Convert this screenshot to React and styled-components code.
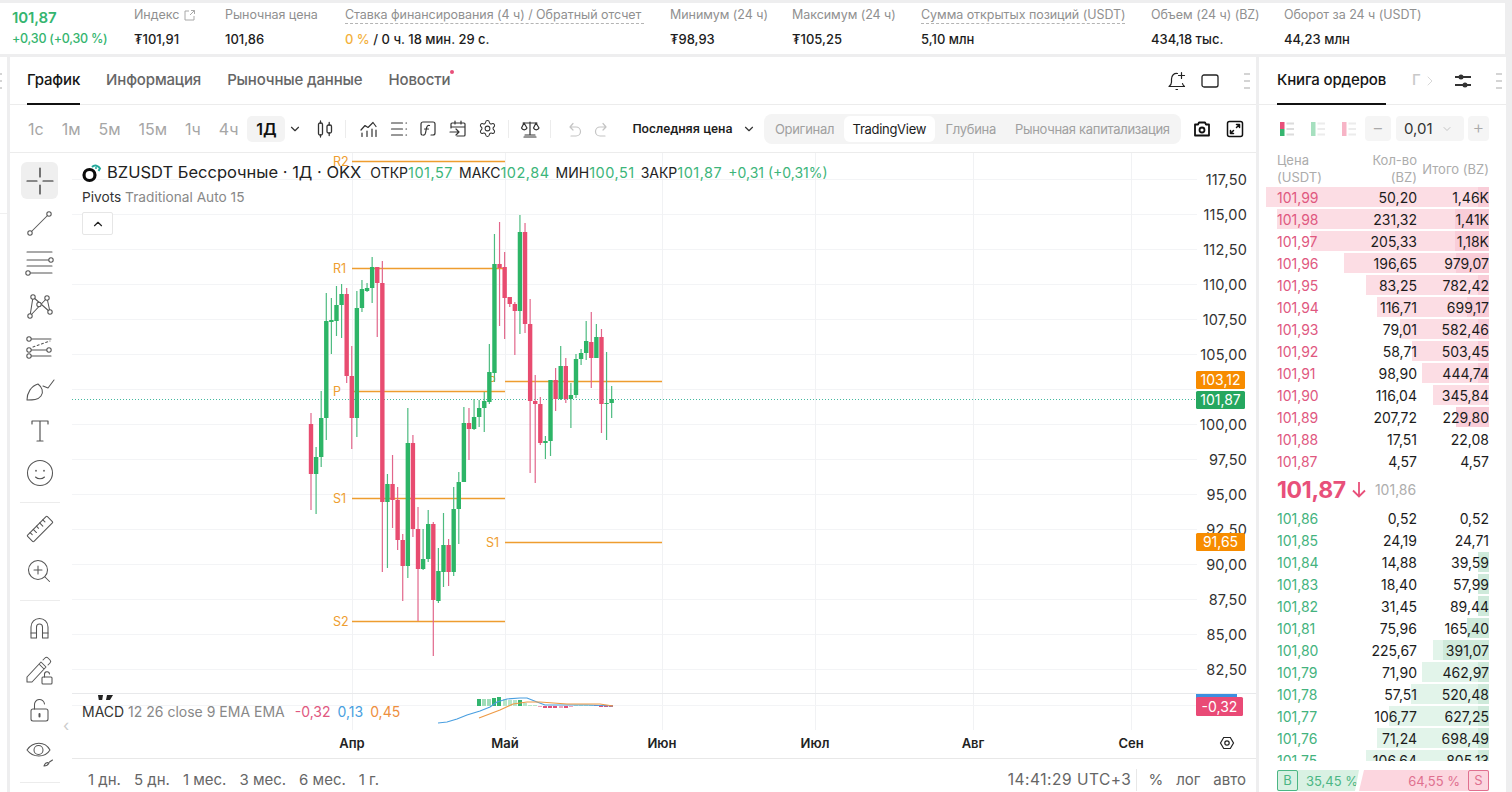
import React from "react";
import styled, { createGlobalStyle } from "styled-components";
import { ChevronDown, ChevronRight, ChevronUp, Settings } from "lucide-react";

const GlobalStyle = createGlobalStyle`
  html, body {
    margin: 0;
    padding: 0;
    background: #eeeeef;
    font-family: "Inter", "Noto Sans", sans-serif;
    color: #1c1c1c;
    overflow: hidden;
  }
  * { box-sizing: border-box; }
`;

const Page = styled.div`
  width: 1512px;
  height: 792px;
  padding-top: 3px;
  display: flex;
  flex-direction: column;
  gap: 3px;
  overflow: hidden;
`;

/* top stats */
const StatsBar = styled.div`
  width: 1505px;
  height: 51px;
  padding-left: 12px;
  background: #fff;
  display: flex;
  gap: 26px;
  align-items: flex-start;
`;

const PriceBlock = styled.div`
  display: flex;
  flex-direction: column;
  width: 96px;
`;

const LastPrice = styled.div`
  margin-top: 5px;
  height: 20px;
  line-height: 20px;
  font-size: 15px;
  font-weight: 600;
  letter-spacing: -0.1px;
  color: #35b56f;
`;

const PriceChange = styled.div`
  margin-top: 2px;
  font-size: 12.5px;
  line-height: 18px;
  font-weight: 500;
  letter-spacing: -0.25px;
  white-space: nowrap;
  color: #35b56f;
`;

const Stat = styled.div`
  flex: none;
  width: ${(p) => p.$w}px;
  display: flex;
  flex-direction: column;
`;

const StatLabel = styled.div`
  margin-top: 4px;
  height: 17px;
  line-height: 16px;
  font-size: 12.5px;
  letter-spacing: -0.05px;
  color: #909090;
  white-space: nowrap;
  display: flex;
  align-items: center;
  gap: 4px;
  border-bottom: ${(p) => (p.$dashed ? "1px dashed #b4b4b4" : "1px solid transparent")};
`;

const StatValue = styled.div`
  margin-top: 6px;
  line-height: 18px;
  font-size: 13px;
  font-weight: 500;
  white-space: nowrap;
  color: #1c1c1c;
`;

const Amber = styled.span`
  color: #f3b13c;
`;

/* main columns */
const Main = styled.div`
  flex: 1;
  display: flex;
  gap: 3px;
  min-height: 0;
`;

const Sliver = styled.div`
  width: 7px;
  background: #fff;
`;

const Handle = styled.div`
  width: 6px;
  height: 16px;
  background: linear-gradient(
    #d4d4d4 0 2px,
    transparent 2px 7px,
    #d4d4d4 7px 9px,
    transparent 9px 14px,
    #d4d4d4 14px 16px
  );
`;

const SliverHandle = styled(Handle)`
  margin: 16px 0 0 -4px;
`;

const SliverRule = styled.div`
  margin-top: 124px;
  height: 1px;
  background: #f0f0f0;
`;

const ChartPanel = styled.div`
  width: 1246px;
  background: #fff;
  display: flex;
  flex-direction: column;
`;

const BookPanel = styled.div`
  width: 247px;
  background: #fff;
  display: flex;
  flex-direction: column;
`;

const TabBar = styled.div`
  height: 48px;
  flex: none;
  display: flex;
  align-items: stretch;
  border-bottom: 1px solid #ececec;
`;

const ChartTabs = styled.div`
  flex: 1;
  display: flex;
  gap: 26px;
  padding-left: 17px;
`;

const Tab = styled.div`
  position: relative;
  height: 48px;
  line-height: 46px;
  font-size: 15px;
  font-weight: 500;
  letter-spacing: -0.15px;
  white-space: nowrap;
  color: ${(p) => (p.$active ? "#161616" : "#666")};
  border-bottom: 2px solid ${(p) => (p.$active ? "#111" : "transparent")};
`;

const FadedTab = styled.div`
  width: 10px;
  margin-left: 26px;
  overflow: hidden;
  line-height: 46px;
  font-size: 15px;
  font-weight: 500;
  color: #c9c9c9;
`;

const NewsDot = styled.i`
  position: absolute;
  top: 13px;
  right: -4px;
  width: 4px;
  height: 4px;
  border-radius: 50%;
  background: #e8507a;
`;

const TabActions = styled.div`
  display: flex;
  align-items: center;
  padding-right: ${(p) => p.$pr}px;
  color: #222;
`;

const IconSlot = styled.div`
  flex: none;
  width: ${(p) => p.$w || 24}px;
  margin-left: ${(p) => p.$ml || 0}px;
  display: flex;
  align-items: center;
  justify-content: center;
  color: ${(p) => (p.$muted ? "#c4c4c4" : "#333")};
`;

const ActionHandle = styled(Handle)`
  margin-left: ${(p) => p.$ml}px;
`;

const Toolbar = styled.div`
  height: 48px;
  flex: none;
  display: flex;
  align-items: center;
  padding-left: 18px;
  border-bottom: 1px solid #ececec;
`;

const TimeButton = styled.div`
  height: 26px;
  line-height: 26px;
  margin-right: 18px;
  font-size: 16px;
  color: #a6a6a6;
`;

const ActiveTime = styled.div`
  width: 38px;
  height: 26px;
  line-height: 26px;
  margin-left: -9px;
  text-align: center;
  font-size: 16px;
  font-weight: 600;
  color: #111;
  background: #f3f3f3;
  border-radius: 5px;
`;

const Separator = styled.div`
  flex: none;
  width: 1px;
  height: 18px;
  margin-left: ${(p) => p.$ml}px;
  background: #ececec;
`;

const PriceType = styled.div`
  width: 90px;
  margin-left: 14px;
  font-family: "Roboto", sans-serif;
  font-size: 13px;
  font-weight: 500;
  white-space: nowrap;
  color: #1c1c1c;
`;

const Segment = styled.div`
  flex: none;
  width: 417px;
  height: 30px;
  margin-left: 8px;
  border-radius: 8px;
  background: #f4f4f4;
  display: flex;
  align-items: center;
  padding-left: 1px;
`;

const SegmentItem = styled.div`
  height: 26px;
  line-height: 26px;
  padding: 0 ${(p) => (p.$active ? 9 : 9.5)}px;
  border-radius: 6px;
  font-size: 13px;
  letter-spacing: -0.3px;
  white-space: nowrap;
  margin-right: ${(p) => (p.$active ? 1 : 0)}px;
  color: ${(p) => (p.$active ? "#1c1c1c" : "#a0a0a0")};
  background: ${(p) => (p.$active ? "#fff" : "transparent")};
`;

/* chart */
const Workspace = styled.div`
  flex: 1;
  display: flex;
  min-height: 0;
`;

const ToolRail = styled.div`
  width: 62px;
  flex: none;
  padding: 7px 3px 0 0;
  display: flex;
  flex-direction: column;
  align-items: center;
  color: #555;
`;

const ToolSlot = styled.div`
  width: 37px;
  height: 41.7px;
  flex: none;
  display: flex;
  align-items: center;
  justify-content: center;
`;

const ActiveTool = styled.div`
  width: 37px;
  height: 37px;
  border-radius: 6px;
  background: #efefef;
  display: flex;
  align-items: center;
  justify-content: center;
  color: #222;
`;

const RailDivider = styled.div`
  width: 40px;
  height: 1px;
  flex: none;
  margin: 8px 0 6px;
  background: #ececec;
`;

const ChartColumn = styled.div`
  flex: 1;
  display: flex;
  flex-direction: column;
  min-width: 0;
`;

const ChartArea = styled.div`
  position: relative;
  height: 605px;
  flex: none;
`;

const ChartSvg = styled.svg`
  display: block;
  font-family: "Inter", "Noto Sans", sans-serif;
`;

const Legend = styled.div`
  position: absolute;
  left: 10px;
  top: 8px;
  display: flex;
  flex-direction: column;
  align-items: flex-start;
`;

const LegendTitle = styled.div`
  display: flex;
  align-items: center;
  height: 22px;
  white-space: nowrap;
`;

const SymbolName = styled.span`
  margin-left: 5px;
  margin-right: 9px;
  font-size: 16.5px;
  color: #222;
`;

const OhlcKey = styled.span`
  font-size: 14px;
  color: #222;
`;

const OhlcValue = styled.span`
  margin-right: 6px;
  font-size: 14.5px;
  letter-spacing: 0.5px;
  color: #3cb57a;
`;

const OhlcChange = styled.span`
  font-size: 14px;
  color: #3cb57a;
`;

const PivotRow = styled.div`
  margin-top: 5px;
  font-size: 13.7px;
  line-height: 18px;
  white-space: nowrap;
  color: #888;
`;

const DarkWord = styled.span`
  color: #333;
`;

const CollapseButton = styled.div`
  margin-top: 6px;
  width: 31px;
  height: 23px;
  background: #fff;
  border: 1px solid #e6e6e6;
  border-radius: 2px;
  display: flex;
  align-items: center;
  justify-content: center;
  color: #222;
`;

const MacdRow = styled.div`
  position: absolute;
  left: 10px;
  top: 550px;
  display: flex;
  gap: 7px;
  font-size: 14px;
  line-height: 18px;
  white-space: nowrap;
  color: #888;
`;

const MacdValue = styled.span`
  color: ${(p) => p.$color};
  margin-left: ${(p) => p.$ml || 0}px;
`;

const RailToggle = styled.div`
  position: absolute;
  left: -9px;
  top: 562px;
  color: #ccc;
`;

const RangeBar = styled.div`
  flex: 1;
  display: flex;
  align-items: center;
  padding: 8px 10px 0 16px;
  border-top: 1px solid #e8e8e8;
  font-size: 15px;
  color: #666;
`;

const Ranges = styled.div`
  flex: 1;
  display: flex;
  gap: 13px;
`;

const RangeInfo = styled.div`
  display: flex;
  align-items: center;
  white-space: nowrap;
`;

const TimeZone = styled.span`
  padding-right: 5px;
  font-size: 15.5px;
  letter-spacing: 0.5px;
`;

const ScaleOptions = styled.div`
  height: 22px;
  display: flex;
  align-items: center;
  gap: 13px;
  padding-left: 11px;
  border-left: 1px solid #e8e8e8;
`;

/* order book */
const BookTabs = styled.div`
  flex: 1;
  display: flex;
  padding-left: 18px;
`;

const BookControls = styled.div`
  height: 47px;
  flex: none;
  display: flex;
  align-items: center;
  padding-left: 21px;
`;

const StepButton = styled.div`
  flex: none;
  width: ${(p) => p.$w}px;
  height: 25px;
  margin-left: ${(p) => p.$ml || 0}px;
  border-radius: 4px;
  background: #f5f5f5;
  font-size: 18px;
  font-weight: 300;
  line-height: 23px;
  text-align: center;
  color: #aaa;
`;

const StepSelect = styled.div`
  flex: none;
  width: 68px;
  height: 25px;
  margin-left: 5px;
  padding-left: 8px;
  border-radius: 4px;
  background: #f5f5f5;
  display: flex;
  align-items: center;
  gap: 8px;
  font-size: 15px;
  color: #333;
`;

const BookHeader = styled.div`
  height: 34px;
  flex: none;
  padding: 0 17px 0 18px;
  display: grid;
  grid-template-columns: 1fr 72px 72px;
  align-items: center;
  font-size: 13px;
  line-height: 17px;
  color: #acacac;
`;

const HeadCell = styled.div`
  text-align: ${(p) => (p.$left ? "left" : "right")};
  white-space: nowrap;
`;

const BookList = styled.div`
  height: ${(p) => p.$h}px;
  flex: none;
  padding: 0 17px 0 18px;
  overflow: hidden;
`;

const BookRow = styled.div`
  position: relative;
  height: 22px;
  display: grid;
  grid-template-columns: 1fr 72px 72px;
  align-items: center;
  font-size: 14px;
  color: #1c1c1c;
`;

const Depth = styled.i`
  position: absolute;
  right: 0;
  top: 1px;
  bottom: 1px;
  background: ${(p) => p.$color};
`;

const Cell = styled.span`
  position: relative;
  text-align: right;
`;

const PriceCell = styled.span`
  position: relative;
  color: ${(p) => (p.$side === "ask" ? "#e0587f" : "#44b37e")};
`;

const MidRow = styled.div`
  height: 35px;
  flex: none;
  padding-left: 18px;
  display: flex;
  align-items: center;
`;

const MidPrice = styled.span`
  font-size: 23px;
  font-weight: 700;
  letter-spacing: -0.3px;
  color: #e8507a;
`;

const MidArrow = styled.span`
  display: flex;
  margin-left: 6px;
  color: #e8507a;
`;

const MidMark = styled.span`
  margin-left: 9px;
  font-size: 14px;
  color: #aeaeae;
`;

const RatioBar = styled.div`
  margin: 9px 17px 0 18px;
  height: 21px;
  display: flex;
  font-size: 13px;
  white-space: nowrap;
`;

const BuySide = styled.div`
  width: 82px;
  background: #d9f1e3;
  clip-path: polygon(0 0, 100% 0, calc(100% - 4px) 100%, 0 100%);
  display: flex;
  align-items: center;
  gap: 8px;
  color: #4bb684;
`;

const SellSide = styled.div`
  flex: 1;
  background: #fcd6df;
  clip-path: polygon(5px 0, 100% 0, 100% 100%, 0 100%);
  display: flex;
  align-items: center;
  justify-content: flex-end;
  gap: 8px;
  color: #e0708f;
`;

const SideBox = styled.span`
  flex: none;
  width: 21px;
  height: 21px;
  line-height: 19px;
  text-align: center;
  font-size: 13px;
  border-radius: 2px;
  border: 1px solid ${(p) => p.$color};
`;

/* drawings */
const stroke = { fill: "none", stroke: "currentColor", strokeLinecap: "round", strokeLinejoin: "round" };

const Ic = ({ size = 32, w = 1.05, children }) => (
  <svg width={size} height={size} viewBox={`0 0 ${size} ${size}`} strokeWidth={w} {...stroke}>
    {children}
  </svg>
);

const Dot = ({ x, y, r = 2.2 }) => <circle cx={x} cy={y} r={r} fill="#fff" />;

const railIcons = [
  <Ic w={1.2}>
    <path d="M3 16h10M19 16h10M16 3v9M16 20v9" />
  </Ic>,
  <Ic>
    <path d="M7.5 24.5 23.5 8.5" />
    <Dot x={25} y={7} />
    <Dot x={6} y={26} />
  </Ic>,
  <Ic>
    <path d="M3 4h25M3 12h22M3 18h25M6 25h22" />
    <Dot x={27} y={12} />
    <Dot x={4} y={25} />
  </Ic>,
  <Ic>
    <path d="M6 26 9 7l17 15L23 8 6 26Z" />
    <Dot x={9} y={7} />
    <Dot x={23} y={8} />
    <Dot x={15} y={14.5} />
    <Dot x={6} y={26} />
    <Dot x={26} y={22} />
  </Ic>,
  <Ic>
    <path d="M7 7h20M7 18h16M7 24h20" />
    <path d="M9 15 26 9" strokeDasharray="2 2.5" />
    <Dot x={5} y={7} />
    <Dot x={5} y={18} />
    <Dot x={25} y={18} />
    <Dot x={5} y={24} />
  </Ic>,
  <Ic>
    <path d="M3 27c0-7 4-14 11-16 4 3 6 8 3 12-3 4-8 4-14 4Z" />
    <path d="M19 13l5 2 6-8" />
  </Ic>,
  <Ic w={1.2}>
    <path d="M8 9V6h16v3M16 6v20M13 26h6" />
  </Ic>,
  <Ic>
    <circle cx="16" cy="16" r="12.5" />
    <path d="M11.5 20c2.5 2.4 6.5 2.4 9 0" />
    <path d="M12 13.5v.5M20 13.5v.5" strokeWidth="1.6" />
  </Ic>,
  <Ic>
    <g transform="rotate(-45 16 16)">
      <rect x="2" y="11.5" width="28" height="9" rx="1" />
      <path d="M6.5 11.5v3M11 11.5v4.5M15.5 11.5v3M20 11.5v4.5M24.5 11.5v3" />
    </g>
  </Ic>,
  <Ic>
    <circle cx="14" cy="15" r="9.5" />
    <path d="M14 11v8M10 15h8M21 22l4.5 4.5" />
  </Ic>,
  <Ic>
    <path d="M7 26V15a8.5 8.5 0 0 1 17 0v11h-5.5V15a3 3 0 0 0-6 0v11Z" />
    <path d="M7 21h5.5M18.5 21H24" />
  </Ic>,
  <Ic>
    <path d="m3 24 0 5 5 0L22 14l-5-5L3 24ZM15 11l5 5M19 7l2-2c1-1 2-1 3 0l2 2c1 1 1 2 0 3l-2 2" />
    <rect x="18" y="24" width="10" height="7" rx="1" />
    <path d="M20.5 24v-2.5a2.5 2.5 0 0 1 5-.5" />
  </Ic>,
  <Ic>
    <rect x="7" y="14" width="17" height="12" rx="2" />
    <path d="M10.5 14v-4a5 5 0 0 1 10-1" />
    <path d="M15.5 19v2.5" strokeWidth="2" />
  </Ic>,
  <Ic>
    <path d="M3 13c6-9 18-9 23 0-5 8-17 8-23 0Z" />
    <circle cx="14.5" cy="13" r="4.5" />
    <path d="M20 29c1-3 3-4 5-3-1 2-3 3-5 3ZM25.5 25l3-2" />
  </Ic>,
];

const CandlesIcon = () => (
  <svg width="20" height="20" viewBox="0 0 20 20" {...stroke} strokeWidth="1.3">
    <rect x="3.5" y="4" width="4" height="12" rx="1.5" />
    <rect x="12" y="6" width="4.5" height="8" rx="1.5" />
    <path d="M5.5 2v2M5.5 16v2M14.2 3.5V6M14.2 14v2.5" />
  </svg>
);

const IndicatorIcon = () => (
  <svg width="20" height="20" viewBox="0 0 20 20" {...stroke} strokeWidth="1.2">
    <path d="M2 11 6 6.5 9 8.5 14 3.5l3 4" />
    <path d="M3 14v3.5M8 12v5.5M13 10v7.5M17 11v6.5" />
  </svg>
);

const ListIcon = () => (
  <svg width="20" height="20" viewBox="0 0 20 20" {...stroke} strokeWidth="1.2">
    <path d="M2.5 4h11M2.5 10h11M2.5 16h11M17 4h.5M17 10h.5M17 16h.5" />
  </svg>
);

const FormulaIcon = () => (
  <svg width="20" height="20" viewBox="0 0 20 20" {...stroke} strokeWidth="1.2">
    <path d="M8 3h7a2 2 0 0 1 2 2v9a2 2 0 0 1-2 2h-2M3 13V5a2 2 0 0 1 2-2h3M3 13v1a2 2 0 0 0 1 2" />
    <path d="M11.5 6.5c-2-.5-2.5.5-3 2.5l-1 5c-.3 1.5-1 2.3-2.5 2M6.5 10h4" />
  </svg>
);

const ReplayIcon = () => (
  <svg width="20" height="20" viewBox="0 0 20 20" {...stroke} strokeWidth="1.2">
    <path d="M3 9V5a1 1 0 0 1 1-1h12a1 1 0 0 1 1 1v11a1 1 0 0 1-1 1H9M3 8h14M7 2v3M13 2v3" />
    <path d="M2 13h9M8 10l3 3-3 3" />
  </svg>
);

const BalanceIcon = () => (
  <svg width="22" height="22" viewBox="0 0 22 22" {...stroke} strokeWidth="1.2">
    <path d="M11 4v13M4 5h14M6 17h10M5 19h12" />
    <path d="M5 5 2.5 10a3 3 0 0 0 5.5 0L5 5ZM17 5l-2.5 5a3 3 0 0 0 5.5 0L17 5Z" />
  </svg>
);

const UndoIcon = ({ flip }) => (
  <svg width="20" height="20" viewBox="0 0 20 20" {...stroke} strokeWidth="1.2" transform={flip ? "scale(-1 1)" : undefined}>
    <path d="M7 8H13a4 4 0 0 1 0 9H8M7 8l3-3.5M7 8l3 3" />
  </svg>
);

const CameraIcon = () => (
  <svg width="20" height="20" viewBox="0 0 20 20" {...stroke} strokeWidth="1.8" color="#111">
    <path d="M3 5.5h3L7 3.5h6l1 2h3v11H3v-11Z" />
    <circle cx="10" cy="11" r="2.5" />
  </svg>
);

const ExpandIcon = () => (
  <svg width="20" height="20" viewBox="0 0 20 20" {...stroke} strokeWidth="1.5" color="#111">
    <rect x="2.5" y="2.5" width="15" height="15" rx="2" />
    <path d="M11.5 8.5 14.5 5.5M11.5 5.5h3v3M8.5 11.5l-3 3M5.5 11.5v3h3" />
  </svg>
);

const BellIcon = () => (
  <svg width="22" height="22" viewBox="0 0 22 22" {...stroke} strokeWidth="1.2" color="#222">
    <path d="M11.5 3.5C8 3 5.5 5.5 5.5 9v3c0 2-1 3.5-2.5 4.5h15.5c-1-.8-1.8-1.8-2-3" />
    <path d="M15.5 2.5v6M12.5 5.5h6M10 19.5h1.500" />
  </svg>
);

const WindowIcon = () => (
  <svg width="18" height="14" viewBox="0 0 18 14" {...stroke} strokeWidth="1.3" color="#222">
    <rect x="1" y="1" width="16" height="12" rx="2" />
  </svg>
);

const FilterIcon = () => (
  <svg width="20" height="20" viewBox="0 0 20 20" fill="none" stroke="#333" strokeWidth="2">
    <path d="M2 6h16M2 14h16" />
    <circle cx="8" cy="6" r="1.5" fill="#333" />
    <circle cx="12" cy="14" r="1.5" fill="#333" />
  </svg>
);

const ExternalIcon = () => (
  <svg width="13" height="13" viewBox="0 0 13 13" fill="none" stroke="#a8a8a8" strokeWidth="1">
    <path d="M6 2H2v9h9V7M7 6l4.5-4.5M8 1.5h3.5V5" />
  </svg>
);

const LayoutIcon = ({ top, bottom, lines }) => (
  <svg width="14" height="14" viewBox="0 0 14 14">
    <rect x="0" y="0" width="4.5" height="7" fill={top} />
    <rect x="0" y="7" width="4.5" height="7" fill={bottom} />
    <path d="M6.5 1.5H14M6.5 7H14M6.5 12.5H14" stroke={lines} strokeWidth="2" />
  </svg>
);

const OkxLogo = () => (
  <svg width="20" height="21" viewBox="0 0 20 21" fill="none">
    <circle cx="7.5" cy="13" r="5.5" stroke="#0b0b0b" strokeWidth="3.2" />
    <path d="M10 5a5 5 0 0 1 8 1.5l-1.5 2.5" stroke="#22a89a" strokeWidth="2" />
    <circle cx="14" cy="6" r="1" fill="#22a89a" />
  </svg>
);

/* data */
const G = 1;
const R = 0;
// colour, wick top, body top, body bottom, wick bottom (page px)
const candles = [
  [R, 413, 424, 474, 510], [G, 447, 457, 474, 514], [G, 391, 418, 457, 467], [G, 293, 321, 418, 440],
  [G, 298, 320, 322, 354], [G, 286, 305, 321, 336], [G, 284, 294, 305, 338], [R, 288, 294, 376, 383],
  [R, 346, 376, 418, 449], [G, 291, 308, 418, 437], [G, 280, 289, 308, 312], [G, 283, 288, 291, 292],
  [G, 257, 267, 288, 303], [R, 267, 267, 283, 337], [R, 261, 283, 502, 572], [G, 474, 484, 502, 568],
  [R, 455, 484, 500, 528], [R, 487, 500, 540, 550], [R, 534, 540, 566, 601], [G, 408, 443, 566, 578],
  [R, 435, 443, 529, 537], [R, 507, 529, 569, 621], [G, 529, 559, 569, 570], [G, 510, 524, 559, 562],
  [R, 522, 524, 600, 656], [G, 548, 571, 601, 603], [G, 513, 545, 572, 587], [R, 539, 545, 572, 586],
  [G, 487, 509, 572, 576], [G, 472, 482, 509, 544], [G, 407, 423, 482, 482], [R, 408, 423, 429, 460],
  [G, 399, 417, 429, 430], [G, 400, 408, 417, 427], [G, 392, 401, 408, 432], [G, 344, 372, 402, 404],
  [G, 234, 264, 373, 382], [R, 222, 264, 268, 326], [R, 252, 267, 298, 339], [R, 297, 297, 304, 307],
  [R, 302, 304, 311, 355], [G, 215, 232, 311, 334], [R, 223, 232, 324, 333], [R, 299, 324, 401, 473],
  [R, 375, 401, 404, 483], [R, 397, 404, 443, 445], [G, 436, 441, 443, 459], [G, 380, 380, 441, 456],
  [R, 368, 380, 399, 411], [G, 346, 366, 399, 400], [R, 358, 366, 399, 403], [G, 383, 395, 399, 428],
  [G, 354, 359, 395, 398], [G, 349, 353, 359, 365], [G, 321, 341, 353, 360], [R, 312, 342, 358, 388],
  [G, 324, 337, 358, 358], [R, 329, 337, 404, 433], [G, 352, 403, 404, 440], [G, 386, 399, 403, 418],
];

const candleX = (i) => 311 + i * 5.096;

const hGrid = Array.from({ length: 15 }, (_, i) => 179.5 + i * 35);
// the 102,50 label sits under the price tags in the picture
const prices = ["117,50", "115,00", "112,50", "110,00", "107,50", "105,00", null, "100,00", "97,50", "95,00", "92,50", "90,00", "87,50", "85,00", "82,50"];
const months = [
  ["Апр", 352],
  ["Май", 505],
  ["Июн", 662],
  ["Июл", 815],
  ["Авг", 973],
  ["Сен", 1131],
];

const pivots = [
  ["R2", 161.5, 352, 505, 333],
  ["R1", 268.5, 352, 505, 333],
  ["P", 391.5, 352, 505, 333],
  ["S1", 498.5, 352, 505, 333],
  ["S2", 621.5, 352, 505, 333],
  ["P", 381.5, 505, 662, 488],
  ["S1", 542.5, 505, 662, 486],
];

// MACD histogram: [x, top, bottom, colour]
const macdBars = [
  [479, 699, 706, "#33b56f"], [484, 699, 706, "#9fdcb8"], [489, 699, 706, "#9fdcb8"], [494, 698, 706, "#33b56f"],
  [499, 697, 706, "#33b56f"], [505, 699, 706, "#b7e6ca"], [510, 700, 706, "#b7e6ca"], [515, 700, 706, "#b7e6ca"],
  [520, 700, 706, "#33b56f"], [525, 703, 706, "#b7e6ca"], [530, 705, 706, "#b7e6ca"], [535, 705, 706, "#b7e6ca"],
  [540, 706, 707, "#f0a5bb"], [545, 706, 708, "#e0507a"], [550, 706, 708, "#e0507a"], [555, 706, 708, "#e0507a"],
  [561, 706, 708, "#f0a5bb"], [566, 706, 708, "#e0507a"], [571, 706, 707, "#f0a5bb"], [576, 705, 706, "#b7e6ca"],
  [581, 705, 706, "#b7e6ca"], [586, 705, 706, "#b7e6ca"], [591, 705, 706, "#b7e6ca"], [596, 705, 706, "#e0507a"],
  [601, 705, 707, "#e0507a"], [606, 705, 707, "#e0507a"], [611, 705, 707, "#e0507a"],
];

const asks = [
  ["101,99", "50,20", "1,46K", 223, 11],
  ["101,98", "231,32", "1,41K", 212, 34],
  ["101,97", "205,33", "1,18K", 178, 34],
  ["101,96", "196,65", "979,07", 145, 33],
  ["101,95", "83,25", "782,42", 123, 11],
  ["101,94", "116,71", "699,17", 112, 22],
  ["101,93", "79,01", "582,46", 89, 11],
  ["101,92", "58,71", "503,45", 77, 11],
  ["101,91", "98,90", "444,74", 67, 11],
  ["101,90", "116,04", "345,84", 56, 0],
  ["101,89", "207,72", "229,80", 33, 33],
  ["101,88", "17,51", "22,08", 0, 0],
  ["101,87", "4,57", "4,57", 0, 0],
];

const bids = [
  ["101,86", "0,52", "0,52", 0, 0],
  ["101,85", "24,19", "24,71", 0, 0],
  ["101,84", "14,88", "39,59", 11, 11],
  ["101,83", "18,40", "57,99", 11, 11],
  ["101,82", "31,45", "89,44", 11, 11],
  ["101,81", "75,96", "165,40", 22, 22],
  ["101,80", "225,67", "391,07", 56, 46],
  ["101,79", "71,90", "462,97", 67, 11],
  ["101,78", "57,51", "520,48", 78, 11],
  ["101,77", "106,77", "627,25", 100, 11],
  ["101,76", "71,24", "698,49", 112, 11],
  ["101,75", "106,64", "805,13", 123, 11],
];

const stats = [
  { label: "Индекс", value: "₮101,91", w: 65, external: true },
  { label: "Рыночная цена", value: "101,86", w: 94 },
  { label: "Ставка финансирования (4 ч) / Обратный отсчет", w: 299, dashed: true, value: <><Amber>0 %</Amber> / 0 ч. 18 мин. 29 с.</> },
  { label: "Минимум (24 ч)", value: "₮98,93", w: 96 },
  { label: "Максимум (24 ч)", value: "₮105,25", w: 103 },
  { label: "Сумма открытых позиций (USDT)", w: 204, dashed: true, value: "5,10 млн" },
  { label: "Объем (24 ч) (BZ)", value: "434,18 тыс.", w: 107 },
  { label: "Оборот за 24 ч (USDT)", value: "44,23 млн", w: 140 },
];

const PriceTag = ({ y, h = 18, w = 49, fill, text }) => (
  <g>
    <rect x="1196" y={y} width={w} height={h} rx="1.5" fill={fill} />
    <text x={1196 + w / 2} y={y + h / 2 + 5} textAnchor="middle" fontSize="14" fill="#fff">
      {text}
    </text>
  </g>
);

const Chart = () => (
  <ChartSvg width="1184" height="605" viewBox="72 153 1184 605">
    {hGrid.map((y) => (
      <line key={y} x1="72" x2="1197" y1={y} y2={y} stroke="#f3f4f6" />
    ))}
    {months.map(([m, x]) => (
      <line key={m} x1={x + 0.5} x2={x + 0.5} y1="153" y2="730" stroke="#f1f2f4" />
    ))}
    <line x1="72" x2="1256" y1="693.5" y2="693.5" stroke="#e8e9eb" />
    <line x1="72" x2="1197" y1="705.5" y2="705.5" stroke="#f3f4f6" />
    <line x1="72" x2="1197" y1="399.5" y2="399.5" stroke="#45b9a0" strokeDasharray="1 2" />

    {pivots.map(([name, y, x1, x2, lx]) => (
      <g key={name + y}>
        <line x1={x1} x2={x2} y1={y} y2={y} stroke="#ee9d2f" strokeWidth="1.4" />
        <text x={lx} y={y + 4.5} fontSize="12.5" fill="#ee9d2f">
          {name}
        </text>
      </g>
    ))}

    {candles.map(([up, wt, bt, bb, wb], i) => {
      const x = candleX(i);
      return (
        <g key={i}>
          <line x1={x} x2={x} y1={wt} y2={wb} stroke={up ? "#4dbb80" : "#e2668b"} strokeWidth="1.2" />
          <rect x={x - 2.2} y={bt} width="4.4" height={Math.max(bb - bt, 1)} fill={up ? "#2db567" : "#e84c70"} />
        </g>
      );
    })}

    {macdBars.map(([x, t, b, c]) => (
      <rect key={x} x={x - 2} y={t} width="4" height={b - t} fill={c} />
    ))}
    <path
      d="M438 723 447 722 457 719 467 715 480 711 490 707 497 702 507 699 520 698 527 698 537 702 545 705 567 705 587 705 613 706"
      fill="none"
      stroke="#4a9fe0"
      strokeWidth="1.2"
    />
    <path
      d="M479 718 500 710 513 704 527 702 540 702 567 704 600 704 613 706"
      fill="none"
      stroke="#ee9a45"
      strokeWidth="1.2"
    />

    <path d="M98 695h5l-.8 5h-3.4ZM107 695h6l-3 5h-4Z" fill="#222" />

    {prices.map(
      (p, i) =>
        p && (
          <text key={p} x="1247" y={hGrid[i] + 5} textAnchor="end" fontSize="14.5" letterSpacing="0.2" fill="#333">
            {p}
          </text>
        )
    )}

    <PriceTag y={371} fill="#f78c00" text="103,12" />
    <PriceTag y={391} fill="#25a75f" text="101,87" />
    <PriceTag y={533} fill="#f78c00" text="91,65" />
    <rect x="1196" y="694" width="41" height="4" fill="#3d8fe0" />
    <PriceTag y={697} h={19} w={47} fill="#e94a76" text="-0,32" />

    {months.map(([m, x]) => (
      <text key={m} x={x} y="747.5" textAnchor="middle" fontSize="13" fontWeight="600" fill="#222">
        {m}
      </text>
    ))}

    <path d="M1220.5 743l3.2-5.5h6.6l3.2 5.5-3.2 5.5h-6.6Z" fill="none" stroke="#222" strokeWidth="1.2" />
    <circle cx="1227" cy="743" r="2.2" fill="none" stroke="#222" strokeWidth="1.2" />
  </ChartSvg>
);

const Row = ({ side, row }) => {
  const [price, qty, total, light, dark] = row;
  return (
    <BookRow>
      {light > 0 && <Depth $color={side === "ask" ? "#fcdde4" : "#e2f4ea"} style={{ width: light }} />}
      {dark > 0 && <Depth $color={side === "ask" ? "#f9cdd8" : "#cfeadb"} style={{ width: dark }} />}
      <PriceCell $side={side}>{price}</PriceCell>
      <Cell>{qty}</Cell>
      <Cell>{total}</Cell>
    </BookRow>
  );
};

export default function App() {
  return (
    <Page>
      <GlobalStyle />
      <StatsBar>
        <PriceBlock>
          <LastPrice>101,87</LastPrice>
          <PriceChange>+0,30 (+0,30 %)</PriceChange>
        </PriceBlock>
        {stats.map((s) => (
          <Stat key={s.label} $w={s.w}>
            <StatLabel $dashed={s.dashed}>
              {s.label}
              {s.external && <ExternalIcon />}
            </StatLabel>
            <StatValue>{s.value}</StatValue>
          </Stat>
        ))}
      </StatsBar>

      <Main>
        <Sliver>
          <SliverHandle />
          <SliverRule />
        </Sliver>

        <ChartPanel>
          <TabBar>
            <ChartTabs>
              <Tab $active>График</Tab>
              <Tab>Информация</Tab>
              <Tab>Рыночные данные</Tab>
              <Tab>
                Новости
                <NewsDot />
              </Tab>
            </ChartTabs>
            <TabActions $pr={6}>
              <IconSlot><BellIcon /></IconSlot>
              <IconSlot $ml={9}><WindowIcon /></IconSlot>
              <ActionHandle $ml={22} />
            </TabActions>
          </TabBar>

          <Toolbar>
            {["1с", "1м", "5м", "15м", "1ч", "4ч"].map((t) => (
              <TimeButton key={t}>{t}</TimeButton>
            ))}
            <ActiveTime>1Д</ActiveTime>
            <IconSlot $w={14} $ml={3}><ChevronDown size={14} /></IconSlot>
            <IconSlot $w={20} $ml={13}><CandlesIcon /></IconSlot>
            <Separator $ml={10} />
            <IconSlot $w={29.6} $ml={8}><IndicatorIcon /></IconSlot>
            <IconSlot $w={29.6}><ListIcon /></IconSlot>
            <IconSlot $w={29.6}><FormulaIcon /></IconSlot>
            <IconSlot $w={29.6}><ReplayIcon /></IconSlot>
            <IconSlot $w={29.6}><Settings size={19} strokeWidth={1.3} /></IconSlot>
            <Separator $ml={6} />
            <IconSlot $w={26} $ml={8}><BalanceIcon /></IconSlot>
            <Separator $ml={7} />
            <IconSlot $w={30} $ml={7} $muted><UndoIcon /></IconSlot>
            <IconSlot $w={30} $muted><UndoIcon flip /></IconSlot>
            <PriceType>Последняя цена</PriceType>
            <IconSlot $w={14} $ml={20}><ChevronDown size={14} /></IconSlot>
            <Segment>
              <SegmentItem>Оригинал</SegmentItem>
              <SegmentItem $active>TradingView</SegmentItem>
              <SegmentItem>Глубина</SegmentItem>
              <SegmentItem>Рыночная капитализация</SegmentItem>
            </Segment>
            <IconSlot $w={24} $ml={9}><CameraIcon /></IconSlot>
            <IconSlot $w={24} $ml={9}><ExpandIcon /></IconSlot>
          </Toolbar>

          <Workspace>
            <ToolRail>
              <ToolSlot><ActiveTool>{railIcons[0]}</ActiveTool></ToolSlot>
              {railIcons.slice(1, 8).map((icon, i) => (
                <ToolSlot key={i}>{icon}</ToolSlot>
              ))}
              <RailDivider />
              {railIcons.slice(8, 10).map((icon, i) => (
                <ToolSlot key={i}>{icon}</ToolSlot>
              ))}
              <RailDivider />
              {railIcons.slice(10).map((icon, i) => (
                <ToolSlot key={i}>{icon}</ToolSlot>
              ))}
              <RailDivider />
            </ToolRail>

            <ChartColumn>
              <ChartArea>
                <Chart />
                <Legend>
                  <LegendTitle>
                    <OkxLogo />
                    <SymbolName>BZUSDT Бессрочные · 1Д · OKX</SymbolName>
                    <OhlcKey>ОТКР</OhlcKey><OhlcValue>101,57</OhlcValue>
                    <OhlcKey>МАКС</OhlcKey><OhlcValue>102,84</OhlcValue>
                    <OhlcKey>МИН</OhlcKey><OhlcValue>100,51</OhlcValue>
                    <OhlcKey>ЗАКР</OhlcKey><OhlcValue>101,87</OhlcValue>
                    <OhlcChange>+0,31 (+0,31%)</OhlcChange>
                  </LegendTitle>
                  <PivotRow><DarkWord>Pivots</DarkWord> Traditional Auto 15</PivotRow>
                  <CollapseButton><ChevronUp size={14} /></CollapseButton>
                </Legend>
                <MacdRow>
                  <span><DarkWord>MACD</DarkWord> 12 26 close 9 EMA EMA</span>
                  <MacdValue $color="#e0587f" $ml={3}>-0,32</MacdValue>
                  <MacdValue $color="#4a9fe0">0,13</MacdValue>
                  <MacdValue $color="#ee8f3e">0,45</MacdValue>
                </MacdRow>
                <RailToggle>‹</RailToggle>
              </ChartArea>
              <RangeBar>
                <Ranges>
                  {["1 дн.", "5 дн.", "1 мес.", "3 мес.", "6 мес.", "1 г."].map((r) => (
                    <span key={r}>{r}</span>
                  ))}
                </Ranges>
                <RangeInfo>
                  <TimeZone>14:41:29 UTC+3</TimeZone>
                  <ScaleOptions>
                    <span>%</span>
                    <span>лог</span>
                    <span>авто</span>
                  </ScaleOptions>
                </RangeInfo>
              </RangeBar>
            </ChartColumn>
          </Workspace>
        </ChartPanel>

        <BookPanel>
          <TabBar>
            <BookTabs>
              <Tab $active>Книга ордеров</Tab>
              <FadedTab>Г</FadedTab>
              <IconSlot $w={16} $muted><ChevronRight size={16} strokeWidth={1} /></IconSlot>
            </BookTabs>
            <TabActions $pr={4}>
              <IconSlot $w={20}><FilterIcon /></IconSlot>
              <ActionHandle $ml={23} />
            </TabActions>
          </TabBar>
          <BookControls>
            <IconSlot $w={14}><LayoutIcon top="#e8507a" bottom="#35b56f" lines="#dcdcdc" /></IconSlot>
            <IconSlot $w={14} $ml={17}><LayoutIcon top="#a6e0bf" bottom="#a6e0bf" lines="#ececec" /></IconSlot>
            <IconSlot $w={14} $ml={17}><LayoutIcon top="#f7b4c6" bottom="#f7b4c6" lines="#ececec" /></IconSlot>
            <StepButton $w={26} $ml={9}>−</StepButton>
            <StepSelect>
              0,01
              <IconSlot $w={12} $muted><ChevronDown size={12} /></IconSlot>
            </StepSelect>
            <StepButton $w={21} $ml={4}>+</StepButton>
          </BookControls>
          <BookHeader>
            <HeadCell $left>Цена<br />(USDT)</HeadCell>
            <HeadCell>Кол-во<br />(BZ)</HeadCell>
            <HeadCell>Итого (BZ)</HeadCell>
          </BookHeader>
          <BookList $h={286}>
            {asks.map((r) => (
              <Row key={r[0]} side="ask" row={r} />
            ))}
          </BookList>
          <MidRow>
            <MidPrice>101,87</MidPrice>
            <MidArrow>
              <svg width="14" height="17" viewBox="0 0 14 17" fill="none" stroke="currentColor" strokeWidth="1.8">
                <path d="M7 1v14M1 9.5 7 15.5 13 9.5" />
              </svg>
            </MidArrow>
            <MidMark>101,86</MidMark>
          </MidRow>
          <BookList $h={254}>
            {bids.map((r) => (
              <Row key={r[0]} side="bid" row={r} />
            ))}
          </BookList>
          <RatioBar>
            <BuySide>
              <SideBox $color="#4bb684">B</SideBox>
              35,45 %
            </BuySide>
            <SellSide>
              64,55 %
              <SideBox $color="#e0708f">S</SideBox>
            </SellSide>
          </RatioBar>
        </BookPanel>
      </Main>
    </Page>
  );
}
